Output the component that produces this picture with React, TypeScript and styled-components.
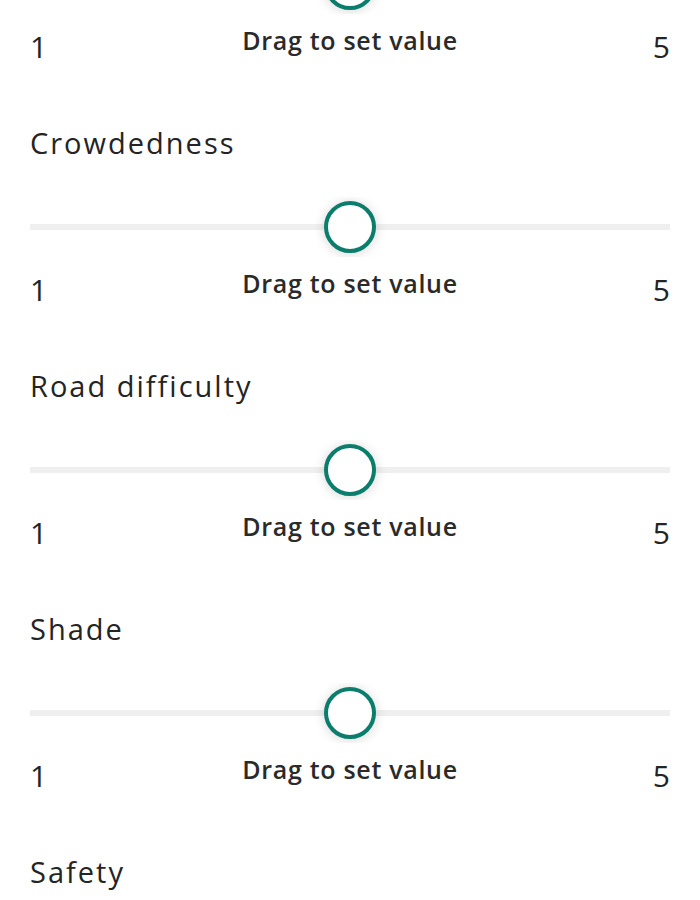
import React from 'react';
import styled, { createGlobalStyle } from 'styled-components';

const GlobalStyle = createGlobalStyle`
  html, body {
    margin: 0;
    padding: 0;
    background: #ffffff;
    overflow: hidden;
  }
  body {
    font-family: "Open Sans", Lato, "Liberation Sans", sans-serif;
    color: #242424;
  }
`;

const Page = styled.div`
  width: 700px;
  height: 900px;
  overflow: hidden;
`;

// the list is scrolled: the first question's slider is half out of view
const QuestionList = styled.div`
  display: flex;
  flex-direction: column;
  margin-top: -46px;
  padding: 0 30px;
`;

const Question = styled.div`
  display: flex;
  flex-direction: column;
`;

const Title = styled.div`
  margin: 61px 0 34px 0;
  height: 40px;
  line-height: 40px;
  font-size: 29px;
  letter-spacing: 2px;
  color: #242424;
`;

const SliderArea = styled.div`
  position: relative;
  height: 60px;
  overflow: hidden;
`;

const Track = styled.div`
  position: absolute;
  left: 0;
  right: 0;
  top: 27px;
  height: 6px;
  background: #efefef;
`;

const Thumb = styled.div<{ $pos: number }>`
  position: absolute;
  top: 4px;
  left: calc(${p => p.$pos * 100}% - 26px);
  width: 44px;
  height: 44px;
  border-radius: 50%;
  border: 4px solid #0b7d6c;
  background: #ffffff;
  box-shadow: 0 1px 12px rgba(0, 0, 0, 0.16);
`;

const ScaleRow = styled.div`
  height: 48px;
  display: flex;
  align-items: flex-start;
  justify-content: space-between;
  padding-top: 11px;
  box-sizing: border-box;
`;

const ScaleNumber = styled.span<{ $align: 'left' | 'right' }>`
  margin-top: 7px;
  line-height: 30px;
  font-size: 30px;
  color: #242424;
  width: 40px;
  text-align: ${p => p.$align};
`;

const Hint = styled.span`
  line-height: 30px;
  font-size: 25px;
  font-weight: 600;
  letter-spacing: 0.7px;
  color: #2a2a2a;
`;

type QuestionItem = {
  title?: string;
  value: number;
};

const questions: QuestionItem[] = [
  { value: 3 },
  { title: 'Crowdedness', value: 3 },
  { title: 'Road difficulty', value: 3 },
  { title: 'Shade', value: 3 },
  { title: 'Safety', value: 3 },
];

const RatingSlider = ({ value, min = 1, max = 5 }: { value: number; min?: number; max?: number }) => {
  const pos = (value - min) / (max - min);
  return (
    <>
      <SliderArea>
        <Track />
        <Thumb $pos={pos} />
      </SliderArea>
      <ScaleRow>
        <ScaleNumber $align="left">{min}</ScaleNumber>
        <Hint>Drag to set value</Hint>
        <ScaleNumber $align="right">{max}</ScaleNumber>
      </ScaleRow>
    </>
  );
};

export default function App() {
  return (
    <Page>
      <GlobalStyle />
      <QuestionList>
        {questions.map((q, i) => (
          <Question key={i}>
            {q.title ? <Title>{q.title}</Title> : null}
            {/* the last question's slider sits below the fold */}
            {i < questions.length - 1 ? <RatingSlider value={q.value} /> : null}
          </Question>
        ))}
      </QuestionList>
    </Page>
  );
}
